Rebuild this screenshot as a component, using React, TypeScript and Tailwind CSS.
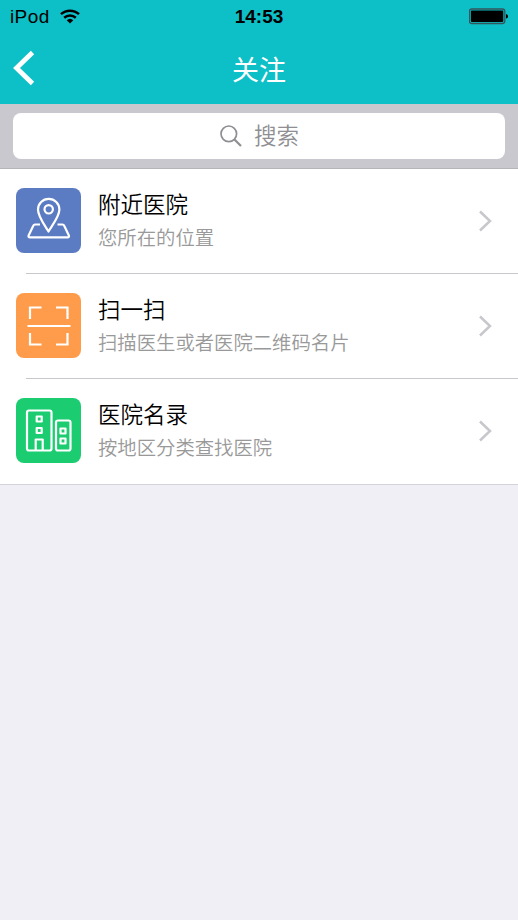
import { ReactNode } from 'react'

type MenuItem = { id: number; title: string; subtitle: string; color: string; icon: ReactNode }

// Ícones desenhados numa grade de 65x65
const items: MenuItem[] = [
  {
    id: 1,
    title: '附近医院',
    subtitle: '您所在的位置',
    color: 'bg-[#5b7bc3]',
    icon: (
      <>
        <path d="M32.500 43.500C28 36 22 28.500 22 21.500a10.700 10.700 0 0 1 21.400 0C43.400 28.500 37 36 32.500 43.500Z" />
        <circle cx="32.700" cy="21.300" r="4.200" />
        <path d="M24 36.500H19q-1.200 0-1.700 1.200L12.600 47.500q-.6 1.800 1.400 1.800H51.500q2 0 1.400-1.800L48.200 37.700Q47.700 36.500 46.500 36.500H41.500" />
      </>
    ),
  },
  {
    id: 2,
    title: '扫一扫',
    subtitle: '扫描医生或者医院二维码名片',
    color: 'bg-[#ff9c4b]',
    icon: (
      <>
        <path d="M14 26V14.500H25.500M40 14.500H51.500V26M51.500 40V51.500H40M25.500 51.500H14V40" strokeLinecap="butt" strokeLinejoin="miter" />
        <path d="M11.500 33H54.500" />
      </>
    ),
  },
  {
    id: 3,
    title: '医院名录',
    subtitle: '按地区分类查找医院',
    color: 'bg-[#1bcc70]',
    icon: (
      <>
        <rect x="11" y="12.500" width="24.500" height="40" rx="2" />
        <rect x="40" y="22.500" width="14.500" height="30" rx="2" />
        <rect x="20.700" y="18.500" width="5" height="5" />
        <rect x="20.700" y="30" width="5" height="5" />
        <path d="M19.700 52V41.500H26.700V52" />
        <rect x="44.500" y="30.500" width="5" height="5" />
        <rect x="44.500" y="40.500" width="5" height="5" />
      </>
    ),
  },
]

function StatusBar() {
  return (
    <div className="flex h-[34px] items-center px-[10px] text-[19px] text-black">
      <div className="flex flex-1 items-center gap-[10px]">
        <span className="leading-[34px] tracking-[0.4px]">iPod</span>
        <svg width="20" height="15" viewBox="0 0 20 15" className="-mt-[2px]" fill="none" stroke="#000" strokeWidth="2.500">
          <path d="M1 5.200A13.200 13.200 0 0 1 19 5.200" />
          <path d="M4.200 8.700A8.700 8.700 0 0 1 15.800 8.700" />
          <path d="M10 14.500L6.700 11.300A4.800 4.800 0 0 1 13.300 11.300Z" fill="#000" stroke="none" />
        </svg>
      </div>
      <span className="font-bold leading-[34px]">14:53</span>
      <div className="flex flex-1 justify-end">
        <svg width="39" height="17" viewBox="0 0 39 17" className="-mt-px">
          <rect x="0.300" y="1" width="35.500" height="14.500" rx="2.500" fill="none" stroke="#34565b" strokeWidth="1.300" />
          <rect x="1.800" y="2.500" width="32.500" height="11.500" rx="1" fill="#000" />
          <path d="M37 6q2 .2 2 2.300t-2 2.300Z" fill="#000" />
        </svg>
      </div>
    </div>
  )
}

export default function FollowPage() {
  return (
    <main className="min-h-screen w-full bg-[#efeff5] font-['Liberation_Sans','Noto_Sans_CJK_SC',sans-serif]">
      <header className="h-[104px] bg-[#0dbfc6]">
        <StatusBar />
        <div className="grid h-[70px] grid-cols-[60px_1fr_60px] items-center">
          <button className="pb-[4px] pl-[13px]" aria-label="返回">
            <svg width="22" height="36" viewBox="0 0 22 36" fill="none" stroke="#fff" strokeWidth="4.800">
              <path d="M19.500 2.500L3.500 18L19.500 33.500" />
            </svg>
          </button>
          <h1 className="pt-[2px] text-center text-[27px] leading-[70px] text-white">关注</h1>
        </div>
      </header>

      <div className="h-[65px] border-b border-[#b4b4b9] bg-[#c9c8ce] px-[13px] pt-[9px]">
        <div className="flex h-[46px] items-center justify-center gap-[12px] rounded-[8px] bg-white pl-px text-[#8e8e93]">
          <svg width="22" height="22" viewBox="0 0 22 22" fill="none" stroke="currentColor" strokeWidth="1.700">
            <circle cx="8.800" cy="8.800" r="7.800" />
            <path d="M14.500 14.500L21 21" strokeWidth="2.200" />
          </svg>
          <span className="pt-[2px] text-[22.500px] font-[350] leading-[46px]">搜索</span>
        </div>
      </div>

      <ul className="border-b border-[#d3d3d8] bg-white">
        {items.map((item, i) => (
          <li key={item.id} className="relative flex h-[105px] items-center pb-px pl-[16px] pr-[26px]">
            <div className={`mb-[2px] h-[65px] w-[65px] shrink-0 rounded-[8px] ${item.color}`}>
              <svg width="65" height="65" viewBox="0 0 65 65" fill="none" stroke="#fff" strokeWidth="2.200" strokeLinejoin="round">
                {item.icon}
              </svg>
            </div>
            <div className="ml-[17px] flex-1 pt-px">
              <p className="text-[22.500px] font-[350] leading-[32px] text-black">{item.title}</p>
              <p className="text-[19.350px] font-[350] leading-[32px] text-[#999]">{item.subtitle}</p>
            </div>
            <svg width="13" height="22" viewBox="0 0 13 22" fill="none" stroke="#c7c7cc" strokeWidth="2.500">
              <path d="M1 1.500L11 11L1 20.500" />
            </svg>
            {i < items.length - 1 && <div className="absolute bottom-0 left-[26px] right-0 h-px bg-[#c8c7cc]" />}
          </li>
        ))}
      </ul>
    </main>
  )
}
